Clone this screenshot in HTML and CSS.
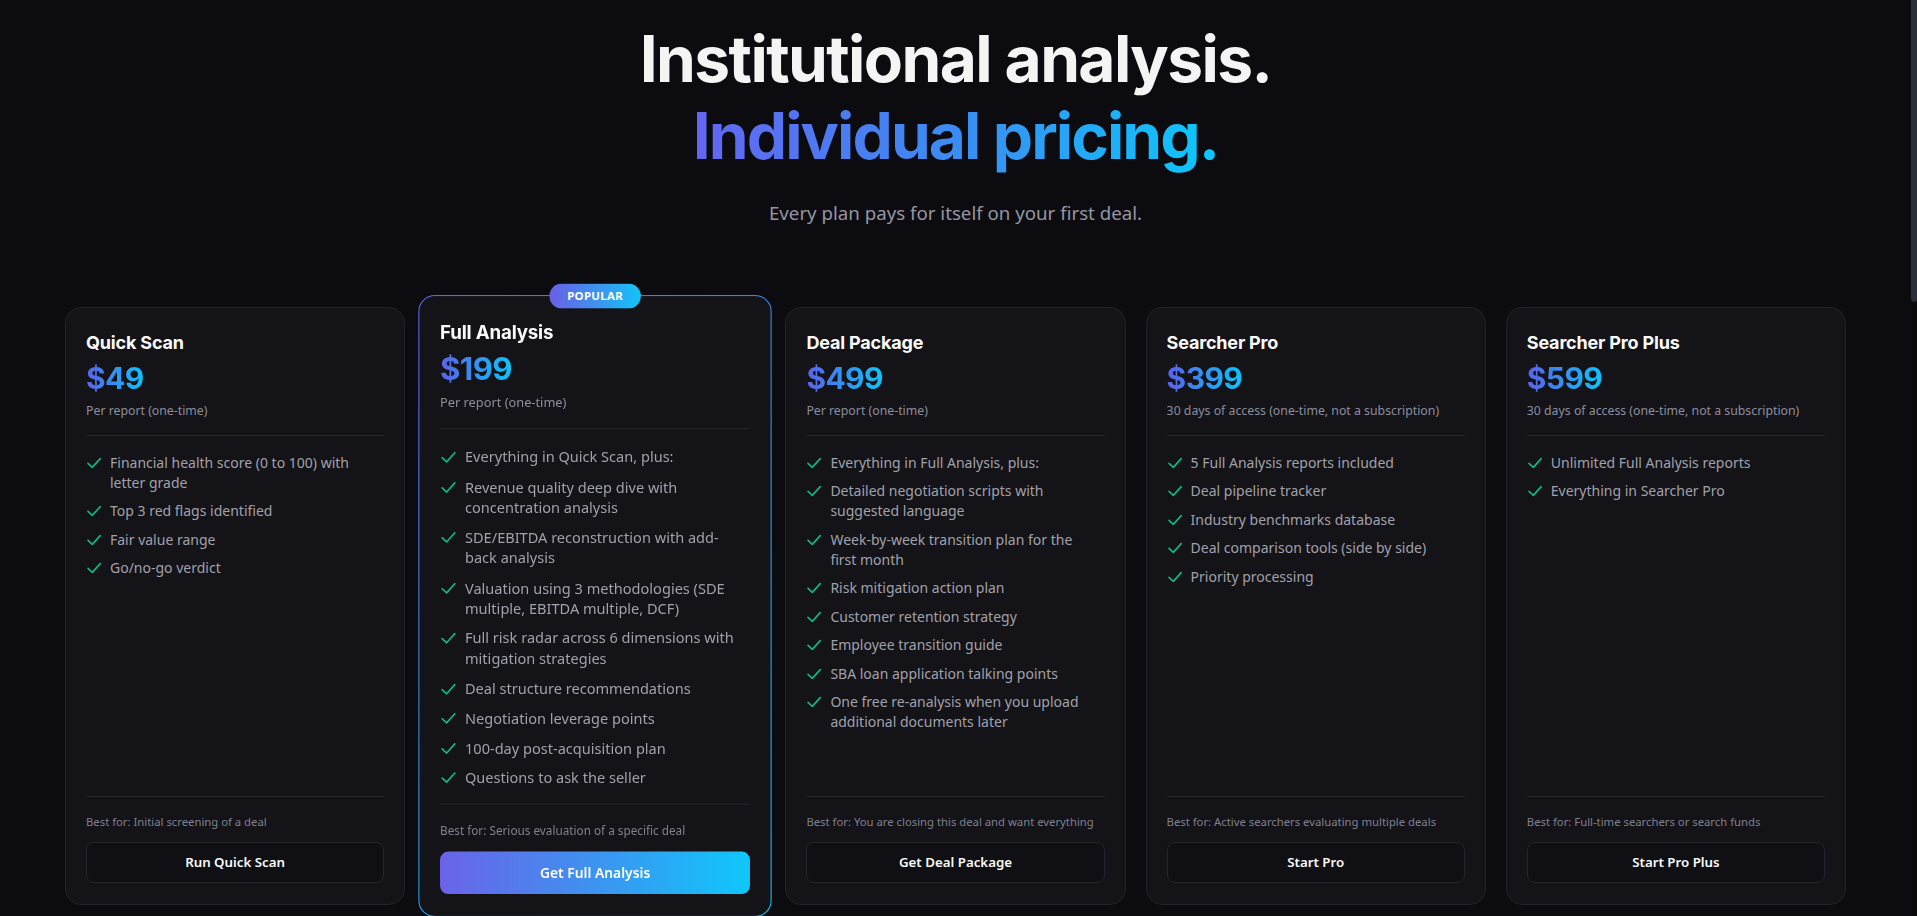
FILE: index.html
```html
<!DOCTYPE html>
<html lang="en">
<head>
<meta charset="utf-8">
<title>Pricing</title>
<link rel="stylesheet" href="styles.css">
</head>
<body>
<div class="page">
  <main class="pricing">
    <header class="hero">
      <h1 class="hero-title">
        <span class="hero-line">Institutional analysis.</span>
        <span class="hero-line"><span class="gradient-text">Individual pricing.</span></span>
      </h1>
      <p class="hero-sub">Every plan pays for itself on your first deal.</p>
    </header>

    <div class="plans">
      <article class="plan">
        <div class="plan-head">
          <h2 class="plan-name">Quick Scan</h2>
          <div class="plan-price"><span class="gradient-text">$49</span></div>
          <p class="plan-note">Per report (one-time)</p>
        </div>
        <ul class="features">
          <li><svg class="check" viewBox="0 0 16 16"><polyline points="2 8.4 6.3 12.4 14.2 3.6"/></svg><span>Financial health score (0 to 100) with letter grade</span></li>
          <li><svg class="check" viewBox="0 0 16 16"><polyline points="2 8.4 6.3 12.4 14.2 3.6"/></svg><span>Top 3 red flags identified</span></li>
          <li><svg class="check" viewBox="0 0 16 16"><polyline points="2 8.4 6.3 12.4 14.2 3.6"/></svg><span>Fair value range</span></li>
          <li><svg class="check" viewBox="0 0 16 16"><polyline points="2 8.4 6.3 12.4 14.2 3.6"/></svg><span>Go/no-go verdict</span></li>
        </ul>
        <div class="plan-foot">
          <p class="best">Best for: Initial screening of a deal</p>
          <button class="plan-btn">Run Quick Scan</button>
        </div>
      </article>

      <article class="plan plan--popular">
        <span class="badge">POPULAR</span>
        <div class="plan-head">
          <h2 class="plan-name">Full Analysis</h2>
          <div class="plan-price"><span class="gradient-text">$199</span></div>
          <p class="plan-note">Per report (one-time)</p>
        </div>
        <ul class="features">
          <li><svg class="check" viewBox="0 0 16 16"><polyline points="2 8.4 6.3 12.4 14.2 3.6"/></svg><span>Everything in Quick Scan, plus:</span></li>
          <li><svg class="check" viewBox="0 0 16 16"><polyline points="2 8.4 6.3 12.4 14.2 3.6"/></svg><span>Revenue quality deep dive with concentration analysis</span></li>
          <li><svg class="check" viewBox="0 0 16 16"><polyline points="2 8.4 6.3 12.4 14.2 3.6"/></svg><span>SDE/EBITDA reconstruction with add-back analysis</span></li>
          <li><svg class="check" viewBox="0 0 16 16"><polyline points="2 8.4 6.3 12.4 14.2 3.6"/></svg><span>Valuation using 3 methodologies (SDE multiple, EBITDA multiple, DCF)</span></li>
          <li><svg class="check" viewBox="0 0 16 16"><polyline points="2 8.4 6.3 12.4 14.2 3.6"/></svg><span>Full risk radar across 6 dimensions with mitigation strategies</span></li>
          <li><svg class="check" viewBox="0 0 16 16"><polyline points="2 8.4 6.3 12.4 14.2 3.6"/></svg><span>Deal structure recommendations</span></li>
          <li><svg class="check" viewBox="0 0 16 16"><polyline points="2 8.4 6.3 12.4 14.2 3.6"/></svg><span>Negotiation leverage points</span></li>
          <li><svg class="check" viewBox="0 0 16 16"><polyline points="2 8.4 6.3 12.4 14.2 3.6"/></svg><span>100-day post-acquisition plan</span></li>
          <li><svg class="check" viewBox="0 0 16 16"><polyline points="2 8.4 6.3 12.4 14.2 3.6"/></svg><span>Questions to ask the seller</span></li>
        </ul>
        <div class="plan-foot">
          <p class="best">Best for: Serious evaluation of a specific deal</p>
          <button class="plan-btn plan-btn--primary">Get Full Analysis</button>
        </div>
      </article>

      <article class="plan">
        <div class="plan-head">
          <h2 class="plan-name">Deal Package</h2>
          <div class="plan-price"><span class="gradient-text">$499</span></div>
          <p class="plan-note">Per report (one-time)</p>
        </div>
        <ul class="features">
          <li><svg class="check" viewBox="0 0 16 16"><polyline points="2 8.4 6.3 12.4 14.2 3.6"/></svg><span>Everything in Full Analysis, plus:</span></li>
          <li><svg class="check" viewBox="0 0 16 16"><polyline points="2 8.4 6.3 12.4 14.2 3.6"/></svg><span>Detailed negotiation scripts with suggested language</span></li>
          <li><svg class="check" viewBox="0 0 16 16"><polyline points="2 8.4 6.3 12.4 14.2 3.6"/></svg><span>Week-by-week transition plan for the first month</span></li>
          <li><svg class="check" viewBox="0 0 16 16"><polyline points="2 8.4 6.3 12.4 14.2 3.6"/></svg><span>Risk mitigation action plan</span></li>
          <li><svg class="check" viewBox="0 0 16 16"><polyline points="2 8.4 6.3 12.4 14.2 3.6"/></svg><span>Customer retention strategy</span></li>
          <li><svg class="check" viewBox="0 0 16 16"><polyline points="2 8.4 6.3 12.4 14.2 3.6"/></svg><span>Employee transition guide</span></li>
          <li><svg class="check" viewBox="0 0 16 16"><polyline points="2 8.4 6.3 12.4 14.2 3.6"/></svg><span>SBA loan application talking points</span></li>
          <li><svg class="check" viewBox="0 0 16 16"><polyline points="2 8.4 6.3 12.4 14.2 3.6"/></svg><span>One free re-analysis when you upload additional documents later</span></li>
        </ul>
        <div class="plan-foot">
          <p class="best">Best for: You are closing this deal and want everything</p>
          <button class="plan-btn">Get Deal Package</button>
        </div>
      </article>

      <article class="plan">
        <div class="plan-head">
          <h2 class="plan-name">Searcher Pro</h2>
          <div class="plan-price"><span class="gradient-text">$399</span></div>
          <p class="plan-note">30 days of access (one-time, not a subscription)</p>
        </div>
        <ul class="features">
          <li><svg class="check" viewBox="0 0 16 16"><polyline points="2 8.4 6.3 12.4 14.2 3.6"/></svg><span>5 Full Analysis reports included</span></li>
          <li><svg class="check" viewBox="0 0 16 16"><polyline points="2 8.4 6.3 12.4 14.2 3.6"/></svg><span>Deal pipeline tracker</span></li>
          <li><svg class="check" viewBox="0 0 16 16"><polyline points="2 8.4 6.3 12.4 14.2 3.6"/></svg><span>Industry benchmarks database</span></li>
          <li><svg class="check" viewBox="0 0 16 16"><polyline points="2 8.4 6.3 12.4 14.2 3.6"/></svg><span>Deal comparison tools (side by side)</span></li>
          <li><svg class="check" viewBox="0 0 16 16"><polyline points="2 8.4 6.3 12.4 14.2 3.6"/></svg><span>Priority processing</span></li>
        </ul>
        <div class="plan-foot">
          <p class="best">Best for: Active searchers evaluating multiple deals</p>
          <button class="plan-btn">Start Pro</button>
        </div>
      </article>

      <article class="plan">
        <div class="plan-head">
          <h2 class="plan-name">Searcher Pro Plus</h2>
          <div class="plan-price"><span class="gradient-text">$599</span></div>
          <p class="plan-note">30 days of access (one-time, not a subscription)</p>
        </div>
        <ul class="features">
          <li><svg class="check" viewBox="0 0 16 16"><polyline points="2 8.4 6.3 12.4 14.2 3.6"/></svg><span>Unlimited Full Analysis reports</span></li>
          <li><svg class="check" viewBox="0 0 16 16"><polyline points="2 8.4 6.3 12.4 14.2 3.6"/></svg><span>Everything in Searcher Pro</span></li>
        </ul>
        <div class="plan-foot">
          <p class="best">Best for: Full-time searchers or search funds</p>
          <button class="plan-btn">Start Pro Plus</button>
        </div>
      </article>
    </div>
  </main>
  <div class="scrollbar"><div class="scrollbar-thumb"></div></div>
</div>
</body>
</html>
```

FILE: styles.css
```css
html, body {
  margin: 0;
  padding: 0;
  height: 100%;
  overflow: hidden;
  background: #0c0c10;
}

body {
  font-family: "Noto Sans", "Open Sans", sans-serif;
  color: #e4e4e7;
  -webkit-font-smoothing: antialiased;
}

.page {
  display: flex;
  height: 916px;
}

.pricing {
  flex: 1;
  min-width: 0;
  padding-top: 21px;
}

.scrollbar {
  width: 6px;
  flex: none;
  background: #0a0a0c;
}

.scrollbar-thumb {
  height: 302px;
  background: #2d2d3b;
  border-radius: 0 0 3px 3px;
}

/* hero */
.hero {
  text-align: center;
}

.hero-title {
  margin: 0;
  font-family: Inter, "Liberation Sans", sans-serif;
  font-weight: 700;
  font-size: 64px;
  line-height: 76.8px;
  letter-spacing: -0.025em;
  color: #f4f4f5;
}

.hero-line {
  display: block;
}

.hero-line .gradient-text {
  letter-spacing: -0.03em;
}

.gradient-text {
  background: linear-gradient(90deg, #6366f1 0%, #3b8cf2 50%, #0bc8fb 100%);
  -webkit-background-clip: text;
  background-clip: text;
  color: transparent;
}

.hero-sub {
  margin: 24px 0 0;
  font-size: 18.7px;
  line-height: 28px;
  color: #9595a4;
}

/* plans grid */
.plans {
  display: grid;
  grid-template-columns: repeat(5, minmax(0, 1fr));
  gap: 20px;
  max-width: 1781px;
  margin: 80px auto 0;
}

.plan {
  position: relative;
  display: flex;
  flex-direction: column;
  background: #131318;
  border: 1px solid #22222a;
  border-radius: 16px;
  padding: 21px 20px;
}

.plan--popular {
  transform: scale(1.04);
  border-color: transparent;
  background:
    linear-gradient(#131318, #131318) padding-box,
    linear-gradient(135deg, #6366f1 0%, #3b8ff0 45%, #0cc6f8 100%) border-box;
  z-index: 1;
}

.badge {
  position: absolute;
  top: -12px;
  left: 50%;
  transform: translateX(-50%);
  height: 24px;
  padding: 0 17px;
  border-radius: 999px;
  background: linear-gradient(90deg, #6a5fe6, #12c4f7);
  color: #ffffff;
  font-size: 11px;
  font-weight: 700;
  line-height: 24px;
  letter-spacing: 0.3px;
  white-space: nowrap;
}

.plan-head {
  padding-bottom: 14px;
  border-bottom: 1px solid #25252d;
}

.plan-name {
  margin: 0;
  font-family: Inter, "Liberation Sans", sans-serif;
  font-weight: 700;
  font-size: 18px;
  line-height: 28px;
  letter-spacing: -0.01em;
  color: #fafafa;
}

.plan-price {
  margin-top: 3px;
  font-family: Inter, "Liberation Sans", sans-serif;
  font-weight: 700;
  font-size: 30px;
  line-height: 36px;
  letter-spacing: -0.02em;
}

.plan-price .gradient-text {
  display: inline-block;
  background: linear-gradient(90deg, #5b62ea 0%, #2f97f2 55%, #0cc4fa 100%);
  -webkit-background-clip: text;
  background-clip: text;
}

.plan-note {
  margin: 5px 0 0;
  font-size: 12.3px;
  line-height: 20px;
  color: #8e8e9c;
}

.features {
  flex: 1;
  display: flex;
  flex-direction: column;
  gap: 8.5px;
  list-style: none;
  margin: 17px 0 15px;
  padding: 0 6px 0 0;
}

.features li {
  display: flex;
  gap: 8px;
  font-size: 14px;
  line-height: 20px;
  color: #a1a1ab;
}

.check {
  flex: none;
  width: 16px;
  height: 16px;
  margin-top: 2px;
  fill: none;
  stroke: #10b981;
  stroke-width: 1.6;
  stroke-linecap: round;
  stroke-linejoin: round;
}

.plan-foot {
  border-top: 1px solid #25252d;
  padding-top: 17px;
}

.best {
  margin: 0;
  font-size: 11.3px;
  line-height: 16px;
  color: #80808e;
}

.plan-btn {
  display: block;
  width: 100%;
  height: 41px;
  margin-top: 12px;
  border: 1px solid #26262e;
  border-radius: 8px;
  background: #0f0f14;
  color: #fafafa;
  font-family: inherit;
  font-size: 13.3px;
  font-weight: 600;
  cursor: pointer;
}

.plan-btn--primary {
  border: none;
  background: linear-gradient(90deg, #6b63e8 0%, #3d93f0 50%, #0fc7fb 100%);
  color: #ffffff;
}
```
